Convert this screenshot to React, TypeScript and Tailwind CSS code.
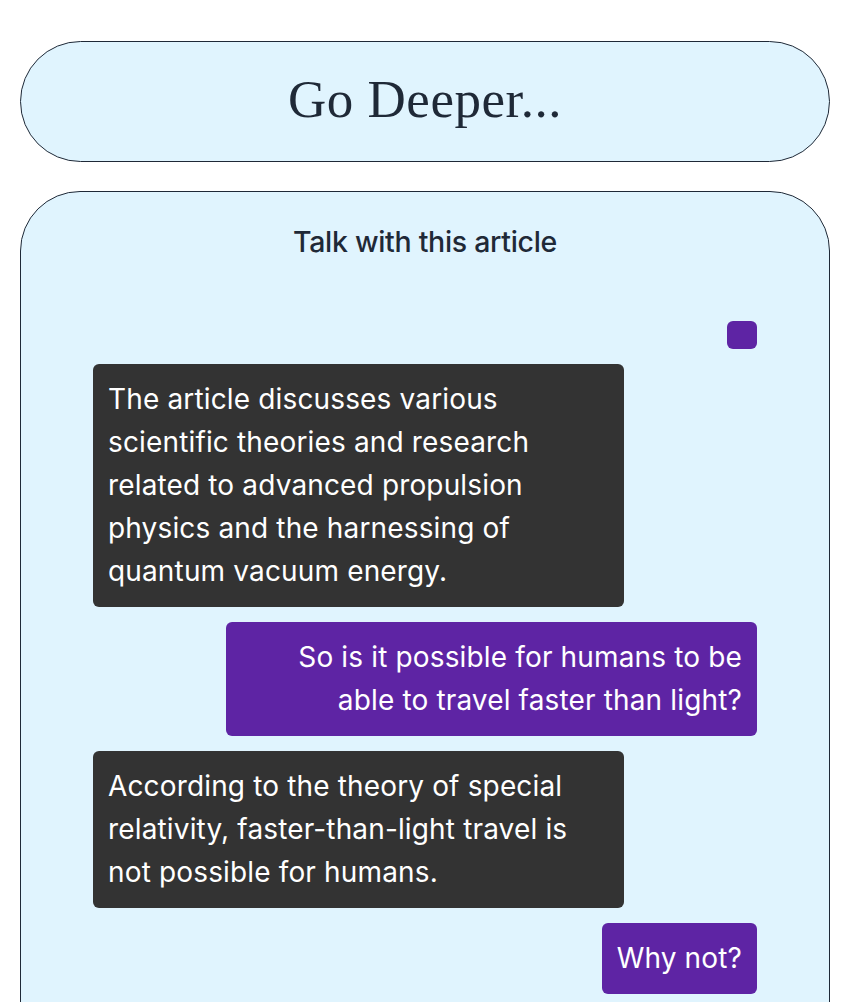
import React from 'react';

type Message = {
  role: 'bot' | 'user';
  lines: string[];
};

const MESSAGES: Message[] = [
  { role: 'user', lines: [] },
  {
    role: 'bot',
    lines: [
      'The article discusses various',
      'scientific theories and research',
      'related to advanced propulsion',
      'physics and the harnessing of',
      'quantum vacuum energy.',
    ],
  },
  {
    role: 'user',
    lines: ['So is it possible for humans to be', 'able to travel faster than light?'],
  },
  {
    role: 'bot',
    lines: [
      'According to the theory of special',
      'relativity, faster-than-light travel is',
      'not possible for humans.',
    ],
  },
  { role: 'user', lines: ['Why not?'] },
];

const Bubble: React.FC<{ message: Message }> = ({ message }) => {
  const isUser = message.role === 'user';
  return (
    <div className={`flex ${isUser ? 'justify-end' : 'justify-start'}`}>
      <div
        className={`rounded-md px-[15px] py-[14px] text-[28px] leading-[43px] tracking-[0.15px] text-white ${
          isUser ? 'bg-[#5e24a4] text-right' : 'bg-[#333333] text-left w-[531px]'
        } ${isUser && message.lines.length > 1 ? 'w-[531px]' : ''}`}
      >
        {message.lines.map((line, i) => (
          <div key={i} className="whitespace-nowrap">
            {line}
          </div>
        ))}
      </div>
    </div>
  );
};

const App: React.FC = () => {
  return (
    <div className="min-h-screen bg-white pt-[41px]" style={{ fontFamily: 'Inter, "Noto Sans", sans-serif' }}>
      <div className="ml-[20px] w-[810px]">
        <div className="flex h-[121px] items-center justify-center rounded-full border border-[#1f2937] bg-[#e0f4fe]">
          <h1
            className="-mt-[3px] text-[53px] text-[#1f2937] tracking-[0.5px]"
            style={{ fontFamily: '"Liberation Serif", "DejaVu Serif", serif' }}
          >
            Go Deeper...
          </h1>
        </div>

        <div className="mt-[29px] rounded-[60px] border border-[#1f2937] bg-[#e0f4fe] px-[72px] pt-[30px] pb-[80px]">
          <h2 className="text-center text-[28.5px] font-medium leading-[40px] text-[#1f2937] tracking-[-0.3px]">
            Talk with this article
          </h2>
          <div className="mt-[59px] flex flex-col gap-[15px]">
            {MESSAGES.map((m, i) => (
              <Bubble key={i} message={m} />
            ))}
          </div>
        </div>
      </div>
    </div>
  );
};

export default App;
